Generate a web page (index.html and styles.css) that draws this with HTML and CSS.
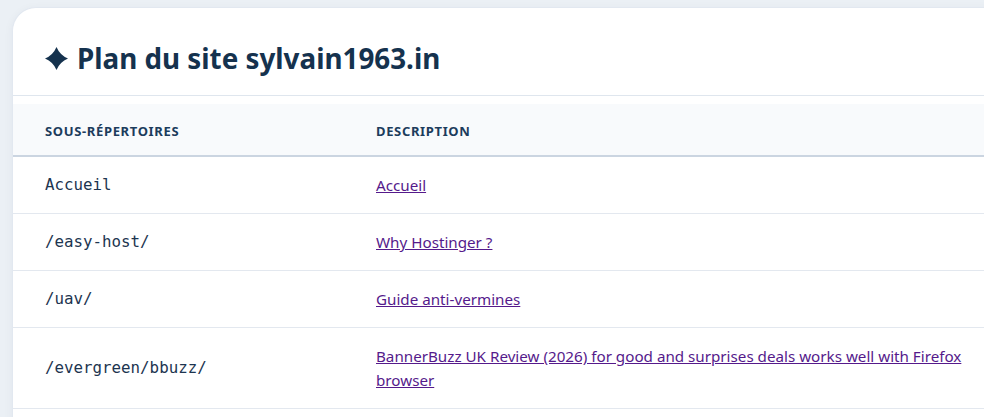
FILE: index.html
```html
<!DOCTYPE html>
<html lang="fr">
<head>
  <meta charset="UTF-8">
  <meta name="viewport" content="width=device-width, initial-scale=1.0">
  <title>Plan du site sylvain1963.in</title>
  <link rel="stylesheet" href="styles.css">
</head>
<body>
  <div class="sitemap">
    <div class="sitemap-header">
      <h1>
        <svg class="star" viewBox="0 0 24 24" width="23" height="23" aria-hidden="true">
          <path d="M12 0 Q15.5 8.5 24 12 Q15.5 15.5 12 24 Q8.5 15.5 0 12 Q8.5 8.5 12 0 Z" fill="currentColor"/>
        </svg>
        Plan du site sylvain1963.in
      </h1>
    </div>
    <div class="table-wrap">
      <table>
        <thead>
          <tr>
            <th class="col-dir">Sous-répertoires</th>
            <th>Description</th>
          </tr>
        </thead>
        <tbody>
          <tr>
            <td class="dir">Accueil</td>
            <td><a href="#">Accueil</a></td>
          </tr>
          <tr>
            <td class="dir">/easy-host/</td>
            <td><a href="#">Why Hostinger ?</a></td>
          </tr>
          <tr>
            <td class="dir">/uav/</td>
            <td><a href="#">Guide anti-vermines</a></td>
          </tr>
          <tr>
            <td class="dir">/evergreen/bbuzz/</td>
            <td><a href="#">BannerBuzz UK Review (2026) for good and surprises deals works well with Firefox browser</a></td>
          </tr>
        </tbody>
      </table>
    </div>
  </div>
</body>
</html>
```

FILE: styles.css
```css
body {
    margin: 0;
    padding: 7px 0 0 12px;
    background-color: #ebf0f5;
    font-family: "Noto Sans", "Open Sans", sans-serif;
    overflow: hidden;
}

.sitemap {
    width: 1000px;
    min-height: 440px;
    background-color: #fff;
    border: 1px solid #e2e8f0;
    border-right: none;
    border-radius: 24px 0 0 0;
    box-shadow: 0 2px 10px rgba(15, 40, 70, 0.05);
}

.sitemap-header {
    padding: 31px 32px 18px;
    border-bottom: 1px solid #dfe6ee;
}

.sitemap-header h1 {
    margin: 0;
    display: flex;
    align-items: center;
    gap: 9px;
    font-size: 27.8px;
    line-height: 38px;
    font-weight: 700;
    color: #15324e;
}

.star {
    color: #15324e;
    flex-shrink: 0;
}

.table-wrap {
    padding-top: 8px;
}

table {
    width: 100%;
    border-collapse: collapse;
}

th {
    text-align: left;
    background-color: #f8fafc;
    padding: 18px 32px 14px;
    font-size: 13px;
    line-height: 19px;
    font-weight: 700;
    text-transform: uppercase;
    letter-spacing: 0.65px;
    color: #1c3c5c;
    border-bottom: 2px solid #cbd5e1;
}

th.col-dir {
    width: 267px;
}

td {
    padding: 16px 32px;
    border-bottom: 1px solid #e3e8ef;
    vertical-align: middle;
    font-size: 15.2px;
    line-height: 24px;
}

td.dir {
    font-family: "DejaVu Sans Mono", monospace;
    font-size: 15.8px;
    color: #1d3550;
}

td a {
    color: #551a8b;
}
```
